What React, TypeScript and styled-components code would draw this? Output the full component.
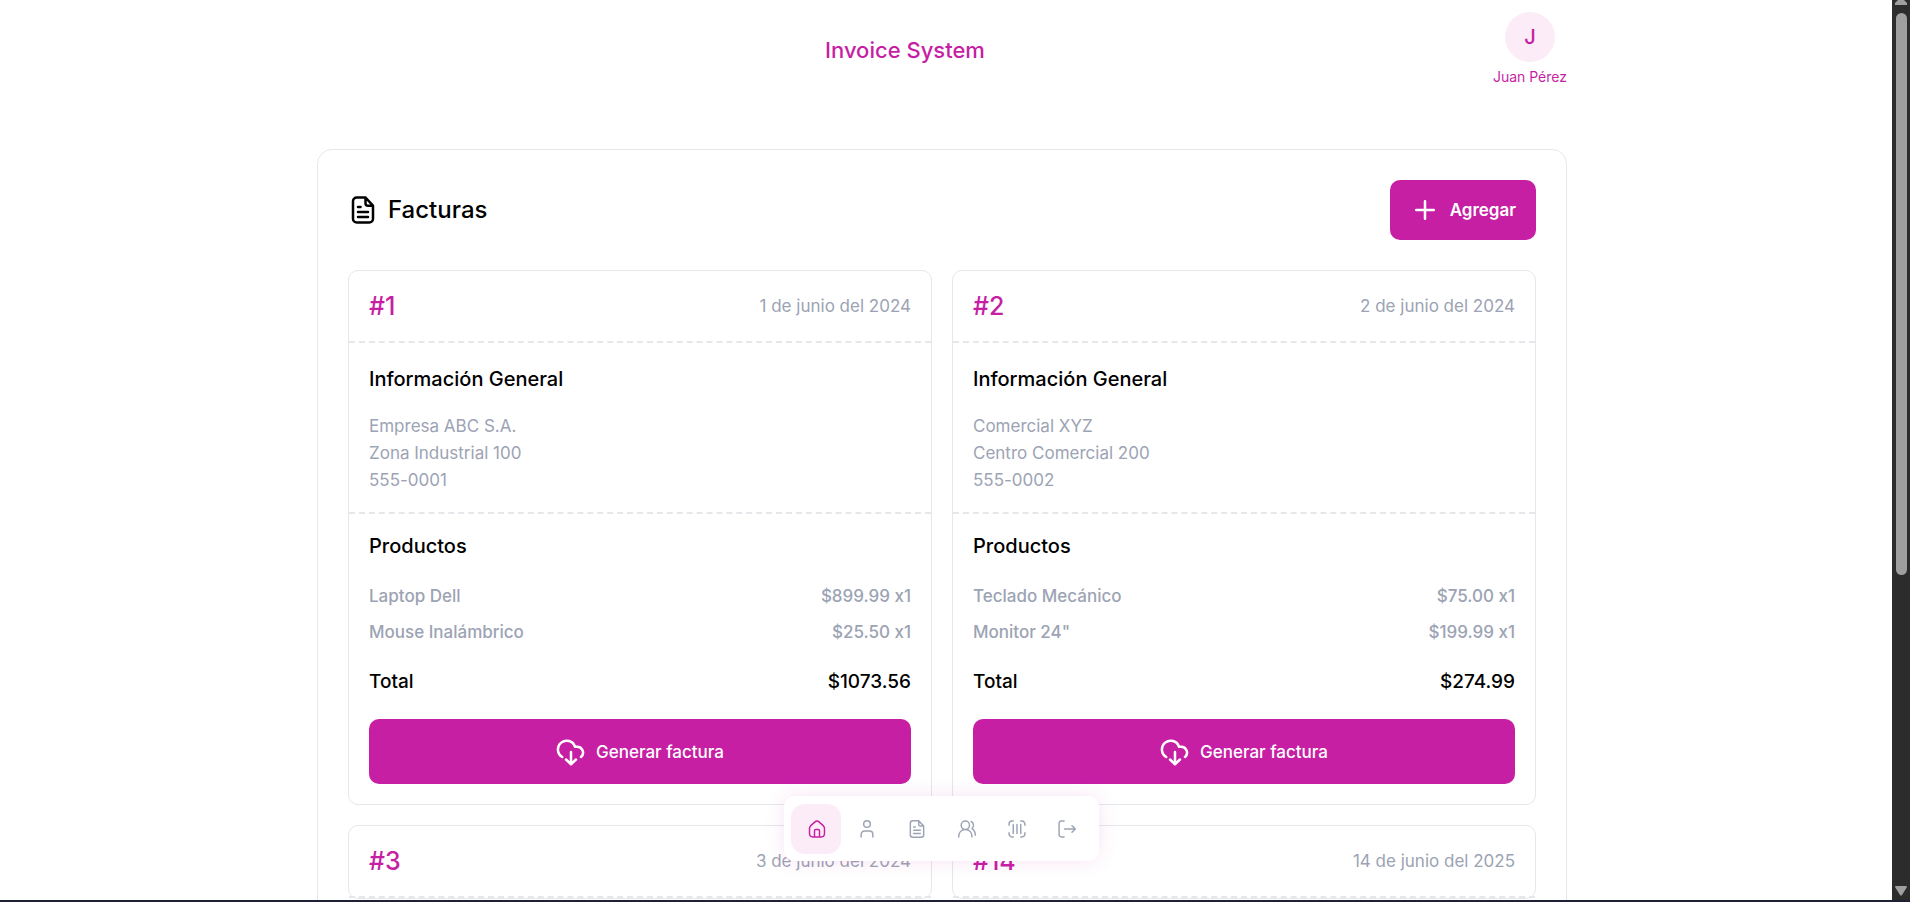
import React from "react";
import styled, { createGlobalStyle, css } from "styled-components";

const Global = createGlobalStyle`
  *, *::before, *::after { box-sizing: border-box; }
  body {
    margin: 0;
    background: #fff;
    font-family: Inter, "Liberation Sans", sans-serif;
    font-feature-settings: "calt" 0;
    color: #000;
  }
  h1, h2, h3, p { margin: 0; padding: 0; font-weight: 500; }
  button { font: inherit; border: 0; cursor: pointer; }
  a { text-decoration: none; }
`;

const pink = "#c61fa4";
const blush = "#fbecf8";
const gray = "#9ca3b4";
const line = "#e5e7eb";

const Shell = styled.div`
  height: 100vh;
  display: flex;
  overflow: hidden;
  border-bottom: 2px solid #1d2036;
`;

const Viewport = styled.div`
  flex: 1;
  min-width: 0;
  padding-right: 8px;
  overflow: hidden;
`;

const Content = styled.div`
  width: 100%;
  max-width: 1250px;
  margin: 0 auto;
`;

const Header = styled.header`
  display: flex;
  align-items: center;
  justify-content: space-between;
  padding: 12px 0 0;
  margin-bottom: 61px;
`;

const Brand = styled.h1`
  font-size: 22px;
  line-height: 30px;
  color: ${pink};
`;

const User = styled.div`
  display: flex;
  flex-direction: column;
  align-items: center;
  gap: 4px;
  color: ${pink};
  font-size: 14px;
  line-height: 22px;
`;

const Avatar = styled.span`
  display: grid;
  place-items: center;
  width: 50px;
  height: 50px;
  border-radius: 50%;
  background: ${blush};
  font-size: 20px;
  font-weight: 500;
`;

const Panel = styled.main`
  border: 1px solid ${line};
  border-radius: 15px;
  padding: 30px;
`;

const PanelHead = styled.div`
  display: flex;
  align-items: center;
  justify-content: space-between;
  margin-bottom: 30px;
`;

const PanelTitle = styled.h2`
  display: flex;
  align-items: center;
  gap: 10px;
  font-size: 24px;
  line-height: 36px;
`;

const Button = styled.button<{ $wide?: boolean }>`
  display: flex;
  align-items: center;
  justify-content: center;
  gap: 10px;
  border-radius: 10px;
  background: ${pink};
  color: #fff;
  font-size: 17px;
  ${(p) =>
    p.$wide
      ? css`width: 100%; height: 65px; font-weight: 500;`
      : css`height: 60px; padding: 0 20px; font-weight: 600;`}
`;

const Grid = styled.div`
  display: grid;
  grid-template-columns: 1fr 1fr;
  gap: 20px;
`;

const Card = styled.article`
  border: 1px solid ${line};
  border-radius: 10px;
`;

const CardHead = styled.div`
  display: flex;
  align-items: center;
  justify-content: space-between;
  height: 72px;
  padding: 0 20px;
  border-bottom: 2px dashed ${line};
`;

const InvoiceNumber = styled.h3`
  font-size: 25px;
  line-height: 32px;
  color: ${pink};
`;

const DateText = styled.time`
  font-size: 17px;
  color: ${gray};
`;

const Section = styled.section`
  padding: 20px 20px 18px;
  & + & { border-top: 2px dashed ${line}; padding: 16px 20px 20px; }
`;

const Label = styled.h3<{ $gap: number }>`
  font-size: 20px;
  line-height: 32px;
  margin-bottom: ${(p) => p.$gap}px;
`;

const Info = styled.p`
  font-size: 17px;
  line-height: 27px;
  font-weight: 400;
  color: ${gray};
`;

const Row = styled.div<{ $total?: boolean }>`
  display: flex;
  justify-content: space-between;
  font-size: ${(p) => (p.$total ? 19 : 17)}px;
  font-weight: 500;
  line-height: 26px;
  color: ${(p) => (p.$total ? "#000" : gray)};
  margin: ${(p) => (p.$total ? "24px 0" : "0 0 10px")};
`;

const Nav = styled.nav`
  position: fixed;
  bottom: 41px;
  left: calc(50% - 171px);
  display: flex;
  padding: 8px 8px 7px 7px;
  border-radius: 10px;
  background: #fff;
  box-shadow: 0 0 20px rgba(198, 31, 164, 0.12);
`;

const NavLink = styled.a<{ $active?: boolean }>`
  display: grid;
  place-items: center;
  width: 50px;
  height: 50px;
  padding-left: 2px;
  border-radius: 14px;
  color: ${(p) => (p.$active ? pink : gray)};
  background: ${(p) => (p.$active ? blush : "transparent")};
`;

const Track = styled.div`
  flex: none;
  width: 18px;
  display: flex;
  flex-direction: column;
  align-items: center;
  justify-content: space-between;
  padding-bottom: 4px;
  background: #2c2c2c;
`;

const Thumb = styled.div`
  width: 11px;
  height: 562px;
  margin: 8px 0 auto;
  border-radius: 6px;
  background: #9f9f9f;
`;

const icons = {
  home: "M3 12V17.500a4 4 0 0 0 4 4H17a4 4 0 0 0 4-4V11.500c0-1.500-.5-2.500-1.500-3.500L14 3.200a3 3 0 0 0-4 0L4.500 8C3.500 9 3 10 3 11.500zM9 21.500v-7.500a1.500 1.500 0 0 1 1.500-1.500h3a1.500 1.500 0 0 1 1.500 1.500v7.500",
  user: "M12 10a4 4 0 1 0 0-8a4 4 0 0 0 0 8zM5 21.500v-3a4 4 0 0 1 4-4h6a4 4 0 0 1 4 4v3",
  file: "M14 2H7a3 3 0 0 0-3 3v14a3 3 0 0 0 3 3h10a3 3 0 0 0 3-3V8.500zM14 2v4.500a2 2 0 0 0 2 2h4M8 9.500h2M8 13.500h8M8 17.500h8",
  users: "M10 12.500a5 5 0 1 0 0-10a5 5 0 0 0 0 10zM2 21.500c0-5 3-9 8-9s8 4 8 9M17 3c3.500 1.500 3.500 6.500 1 8.500c2.500 1.500 4 4.500 4 8",
  scan: "M2.500 7.500V6a3.500 3.500 0 0 1 3.500-3.500h1.500M16.500 2.500h1.500a3.500 3.500 0 0 1 3.500 3.500v1.500M21.500 16.500v1.500a3.500 3.500 0 0 1-3.500 3.500h-1.500M7.500 21.500H6a3.500 3.500 0 0 1-3.500-3.500v-1.500M7.500 6.500v11M12 6.500v11M16.500 6.500v11",
  logout: "M8.500 2.500H5a2.500 2.500 0 0 0-2.500 2.500v14a2.500 2.500 0 0 0 2.500 2.500h3.500M9 12h13M18 8l4 4l-4 4",
  plus: "M12 5v14M5 12h14",
  cloud: "M5 16A7 7 0 1 1 15.200 7.800h1.300A4.700 4.700 0 0 1 20 16M12 12v9.500M8 18l4 3.800l4-3.800",
};

const Icon = ({ name, size, weight = 2 }: { name: keyof typeof icons; size: number; weight?: number }) => (
  <svg width={size} height={size} viewBox="0 0 24 24" fill="none" stroke="currentColor" strokeWidth={weight} strokeLinecap="round" strokeLinejoin="round" overflow="visible" aria-hidden="true">
    <path d={icons[name]} />
  </svg>
);

const Arrow = ({ d, height }: { d: string; height: number }) => (
  <svg width="12" height={height} viewBox={`0 0 12 ${height}`} fill="#9f9f9f" aria-hidden="true">
    <path d={d} />
  </svg>
);

type Invoice = { id: number; date: string; info: string[]; products: [string, string][]; total: string };

const invoices: Invoice[] = [
  { id: 1, date: "1 de junio del 2024", info: ["Empresa ABC S.A.", "Zona Industrial 100", "555-0001"], products: [["Laptop Dell", "$899.99 x1"], ["Mouse Inalámbrico", "$25.50 x1"]], total: "$1073.56" },
  { id: 2, date: "2 de junio del 2024", info: ["Comercial XYZ", "Centro Comercial 200", "555-0002"], products: [["Teclado Mecánico", "$75.00 x1"], ['Monitor 24"', "$199.99 x1"]], total: "$274.99" },
  { id: 3, date: "3 de junio del 2024", info: [], products: [], total: "" },
  { id: 14, date: "14 de junio del 2025", info: [], products: [], total: "" },
];

const links: [keyof typeof icons, string][] = [
  ["home", "Inicio"], ["user", "Usuario"], ["file", "Facturas"], ["users", "Clientes"], ["scan", "Productos"], ["logout", "Salir"],
];

export default function App() {
  return (
    <Shell>
      <Global />
      <Viewport>
        <Content>
          <Header>
            <span />
            <Brand>Invoice System</Brand>
            <User><Avatar>J</Avatar>Juan Pérez</User>
          </Header>
          <Panel>
            <PanelHead>
              <PanelTitle><Icon name="file" size={30} />Facturas</PanelTitle>
              <Button><Icon name="plus" size={30} />Agregar</Button>
            </PanelHead>
            <Grid>
              {invoices.map((v) => (
                <Card key={v.id}>
                  <CardHead><InvoiceNumber>#{v.id}</InvoiceNumber><DateText>{v.date}</DateText></CardHead>
                  {v.total && (
                    <>
                      <Section>
                        <Label $gap={18}>Información General</Label>
                        {v.info.map((t) => <Info key={t}>{t}</Info>)}
                      </Section>
                      <Section>
                        <Label $gap={21}>Productos</Label>
                        {v.products.map(([n, p]) => <Row key={n}><span>{n}</span><span>{p}</span></Row>)}
                        <Row $total><span>Total</span><span>{v.total}</span></Row>
                        <Button $wide><Icon name="cloud" size={30} />Generar factura</Button>
                      </Section>
                    </>
                  )}
                </Card>
              ))}
            </Grid>
          </Panel>
        </Content>
      </Viewport>
      <Track aria-hidden="true">
        <Arrow height={5} d="M3 0h6l3 3v2H0V3z" />
        <Thumb />
        <Arrow height={10} d="M1 0h10q1 0 1 1L7 9q-1 1-2 0L0 1q0-1 1-1z" />
      </Track>
      <Nav>
        {links.map(([n, label], i) => <NavLink key={n} href="#" aria-label={label} $active={i === 0}><Icon name={n} size={20} weight={1.75} /></NavLink>)}
      </Nav>
    </Shell>
  );
}
